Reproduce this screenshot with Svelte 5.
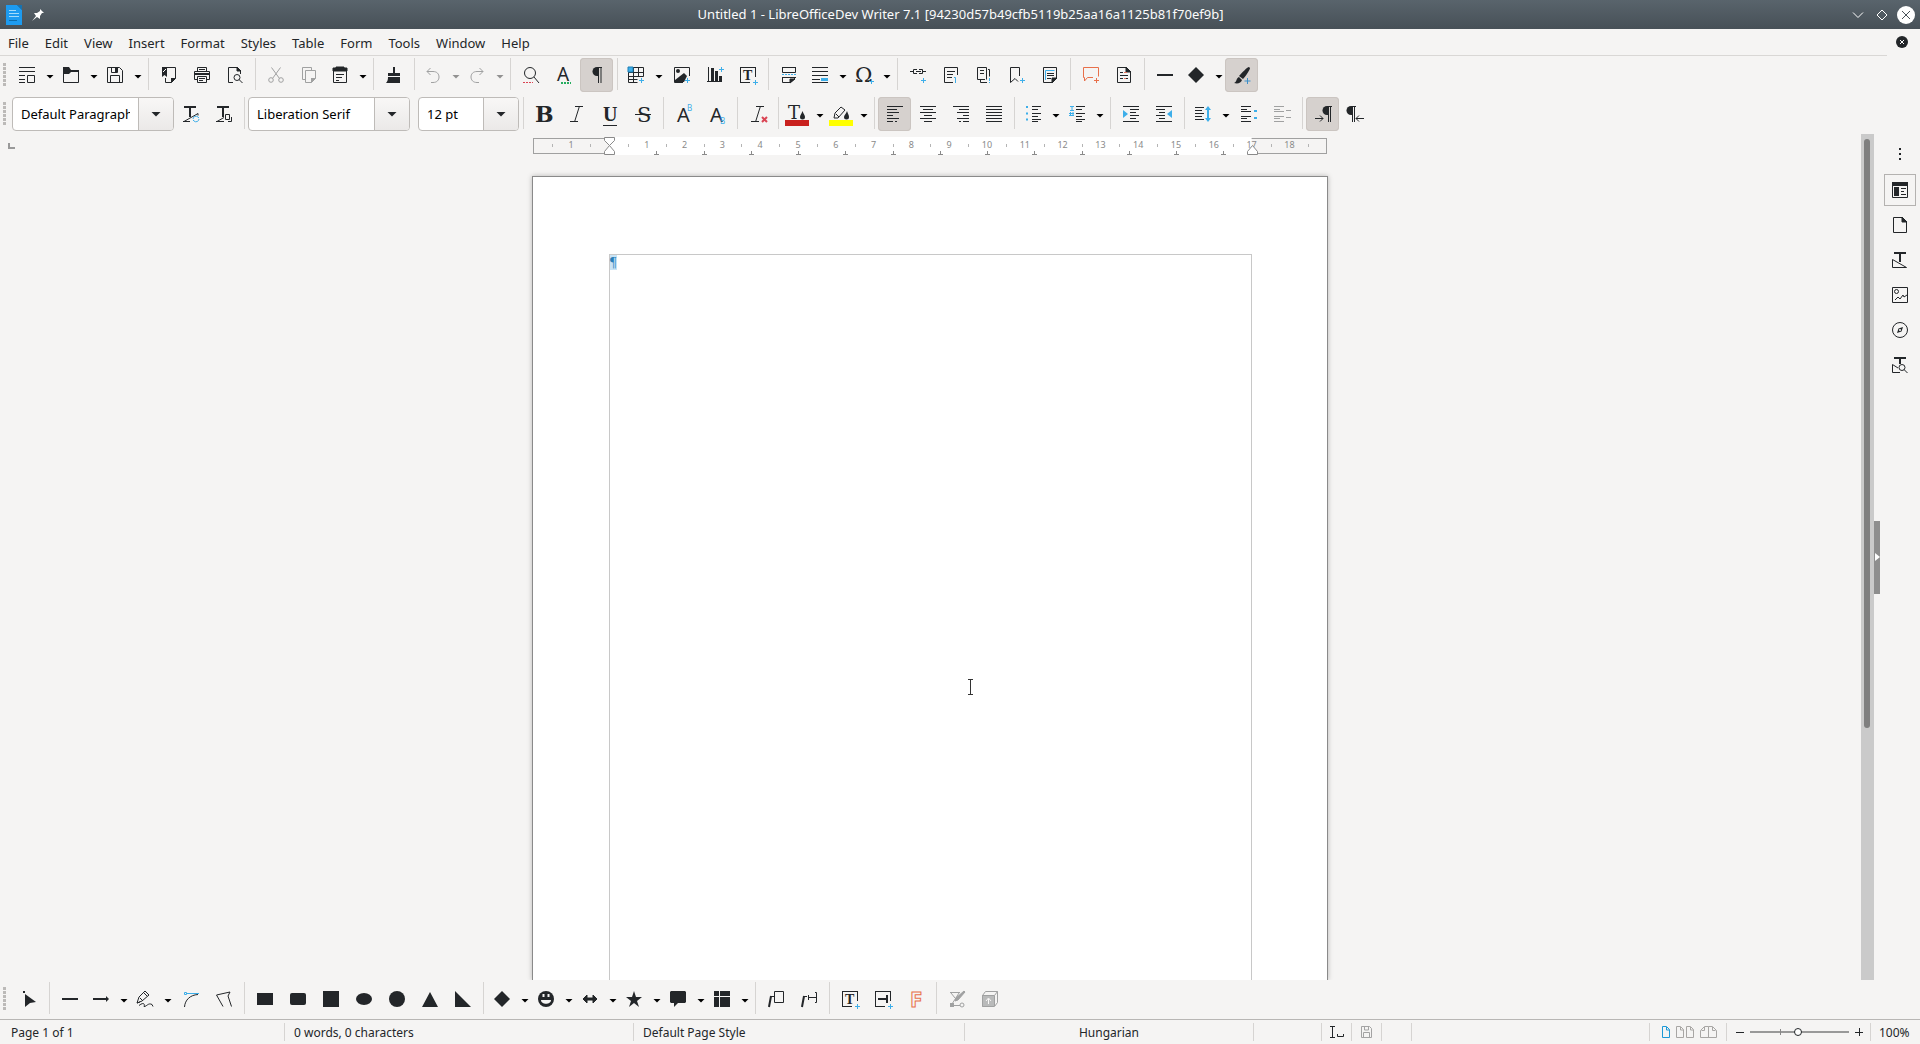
<script lang="ts">
  type Tool = {
    icon?: string;
    label?: string;
    split?: boolean;
    on?: boolean;
    off?: boolean;
    sep?: boolean;
    gap?: boolean;
    combo?: string;
    narrow?: boolean;
  };

  const menus = ['File', 'Edit', 'View', 'Insert', 'Format', 'Styles', 'Table', 'Form', 'Tools', 'Window', 'Help'];

  // 16x16 icons, everything is stroked with the text colour unless it says otherwise
  const icons: Record<string, string> = {
    new: '<path d="M0 .5h16M0 4.5h6M0 8.5h6M0 12.5h6M0 15.5h6M8.5 8.5h7v7h-7zM0 4.5h16"/>',
    open: '<path d="M.5 1v14.500h15V4.500H8"/><path d="M0 0h6l2 3h8v2H8L6 7H0z" fill="#232629" stroke="none"/>',
    save: '<path d="M.5.500h12l3 3v12H.500zM3.500 15V8.500h9V15M4.500 1v4.500h6V1"/><path d="M8 1h2v4H8z" fill="#232629" stroke="none"/>',
    exportpdf: '<path d="M5 .500h9.500v11l-4 4h-6V11"/><path d="M1 0h5v10l-2.500-2L1 10z" fill="#232629" stroke="none"/><path d="M10 16v-5h5z" fill="#232629" stroke="none"/><path d="M2 5l3-3" stroke="#fff"/>',
    print: '<path d="M3.500 4V.500h9V4M5 2.500h6M3.500 12.500h-3v-8h15v8h-3"/><path d="M3.500 9.500h9v6h-9zM5 11.500h6M5 13.500h4"/><path d="M1 6h14v2H1z" fill="#232629" stroke="none"/>',
    preview: '<path d="M6 15.500H1.500V.500h9l3 3V7"/><path d="M10 0v4h4z" fill="#232629"/><circle cx="10" cy="10.500" r="3"/><path d="M12 12.500l3.500 3.500"/>',
    cut: '<path d="M3.500.500l8 11M12.500.500l-8 11"/><circle cx="3" cy="13" r="2.300"/><circle cx="13" cy="13" r="2.300"/>',
    copy: '<path d="M4 12.500H1.500V.500h9V3"/><path d="M4.500 3.500h10v8l-4 4h-6z"/><path d="M10 16v-5h5z" fill="#232629" stroke="none"/>',
    paste: '<path d="M1.500 1.500h13v14h-13zM4 7.500h8M4 10.500h6M4 13.500h3"/><path d="M1 1h3V0h8v1h3v3H1z" fill="#232629"/>',
    clone: '<path d="M7 0h2v6h5v3H2V6h5zM2 10h12v6H0c1.500-1.500 2-3 2-6z" fill="#232629" stroke="none"/>',
    undo: '<path d="M5.500 1L2 4.500 5.500 8M2 4.500h6c4 0 6 2.500 6 5.500s-2 5.500-6 5.500H6"/>',
    redo: '<path d="M10.500 1L14 4.500 10.500 8M14 4.500H8c-4 0-6 2.500-6 5.500s2 5.500 6 5.500h2"/>',
    find: '<circle cx="7" cy="6" r="5.500"/><path d="M11 10l5 6"/><path d="M0 15.500h10" stroke="#da4453" stroke-dasharray="2 1"/>',
    spell: '<text x="1" y="14" font-size="19" font-family="Noto Sans">A</text><path d="M5 16h10" stroke="#27ae60" stroke-width="2" stroke-dasharray="2 1"/>',
    pilcrow: '<path d="M12 0v16M9.500 0v16M8 .500h5"/><path d="M9 0H8a4 4 0 0 0 0 9h1z" fill="#232629" stroke="none"/>',
    table: '<path d="M.500.500h15v9M.500.500v15h9M.500 5.500h15M.500 9.500h15M.500 12.500h9M5.500 0v15M10.500 0v10"/><path d="M0 0h5v5H0z" fill="#3daee9" stroke="#1d7fb5"/><path d="M13.500 11v5M11 13.500h5" stroke="#3daee9"/>',
    image: '<path d="M9 15.500H.500V.500h15V9"/><circle cx="4" cy="4" r="2" fill="#232629" stroke="none"/><path d="M1 15V13l9-7 3 3-3 6z" fill="#232629" stroke="none"/><path d="M13.500 11v5M11 13.500h5" stroke="#3daee9"/>',
    chart: '<path d="M1.500 0v14.500H15M0 14.500h2"/><path d="M4 1h3v13H4zM8 4h3v10H8zM12 9h3v5h-3z" fill="#232629" stroke="none"/><path d="M14.500 0v5M12 2.500h5" stroke="#3daee9"/>',
    textbox: '<path d="M0 .500h16M.500 0v16M0 15.500h10M15.500 0v10"/><text x="3" y="13" font-size="14" font-weight="bold" font-family="Liberation Serif">T</text><path d="M15.500 13v5M13 15.500h5" stroke="#3daee9"/>',
    pagebreak: '<path d="M1.500 0v5.500h13V0M1 .500h14"/><path d="M1 7.500h15" stroke="#3daee9" stroke-dasharray="2 1"/><path d="M1.500 10v5.500h8l5-5V10M1 10.500h14"/><path d="M9 16v-4h5z" fill="#232629"/>',
    field: '<path d="M0 .500h16M0 4.500h16M0 8.500h16M0 12.500h8M0 15.500h16"/><path d="M9 11h7v3H9z" fill="#3daee9" stroke="none"/>',
    omega: '<text x="-1" y="15" font-size="21" font-family="DejaVu Serif">Ω</text><path d="M15.500 12v5M13 14.500h5" stroke="#3daee9"/>',
    link: '<path d="M0 4.500h3M7 2.500H3.500v4H7M6 4.500h5M9 2.500h3.500v4H9M13 4.500h3"/><path d="M13.500 11v5M11 13.500h5" stroke="#3daee9"/>',
    footnote: '<path d="M10 15.500H1.500V.500h13V8M4 4.500h8M4 7.500h6M4 10.500h5"/><path d="M12.500 16v-5.500H11" stroke="#3daee9"/>',
    endnote: '<path d="M9 12.500H1.500V.500h9v12M4 3.500h4M4 6.500h4M12 2.500h1.500v7M4.500 13v2.500H11"/><path d="M13.500 11v5" stroke="#3daee9" stroke-dasharray="3 1"/>',
    bookmark: '<path d="M10.500 9V.500h-9v15l4.500-4 3 3"/><path d="M13.500 11v5M11 13.500h5" stroke="#3daee9"/>',
    crossref: '<path d="M1.500.500h13v11l-4 4h-9z"/><path d="M3.500 13V3.500h9" stroke="#3daee9"/><path d="M5 6.500h7M5 8.500h7M5 11.500h4"/><path d="M10 16v-5h5z" fill="#232629"/>',
    comment: '<g stroke="#e8704a"><path d="M10 10.500H4.500l-3 3.500v-3.500H.500V.500h15v9M13.500 11v5M11 13.500h5"/></g>',
    track: '<path d="M1.500.500h9l4 4v11h-13zM4 5.500h3M4 8.500h8M4 11.500h3M9 11.500h3"/><path d="M10 0v5h5z" fill="#232629"/><path d="M8 5.500h3M8 11.500h2" stroke="#e5735c"/>',
    line: '<path d="M0 8h16" stroke-width="2"/>',
    diamond: '<path d="M8 0l8 8-8 8-8-8z" fill="#232629" stroke="none"/>',
    brush: '<path d="M15 0l1 1c0 2-5 9-7 11l-4-3c3-3 8-9 10-9zM5 10l3 3c-1 3-4 4-8 3 3-1 2-5 5-6z" fill="#232629" stroke="none"/><path d="M13.500 11v6M10.500 14h6" stroke="#3d8fc9"/>',

    updatestyle: '<path d="M1 1h12M7 1v10" stroke-width="2"/><path d="M0 15.500h7M1 15.500l14-8v2"/><path d="M10 13a3 3 0 0 1 5-2l1 1M16 13a3 3 0 0 1-5 2l-1-1" stroke="#3daee9"/>',
    newstyle: '<path d="M1 1h12M7 1v10" stroke-width="2"/><path d="M0 15.500h8M1 15.500l7-4M9.500 8.500h4v5h-4zM12 15.500h3.500V11"/>',
    bold: '<text x="-1" y="16" font-size="22" font-weight="bold" font-family="DejaVu Serif">B</text>',
    italic: '<path d="M6 .500h8M1 15.500h8M10.500 0l-5 16" />',
    underline: '<text x="1" y="15" font-size="20" font-weight="bold" font-family="Liberation Serif">U</text><path d="M1 19.500h14"/>',
    strike: '<text x="2" y="16" font-size="21" font-family="DejaVu Serif">S</text><path d="M0 8.500h16" />',
    sup: '<text x="1" y="16" font-size="20" font-family="Noto Sans">A</text><text x="11" y="5" font-size="8" font-family="Noto Sans" fill="#3daee9">B</text>',
    sub: '<text x="1" y="16" font-size="20" font-family="Noto Sans">A</text><text x="11" y="18" font-size="8" font-family="Noto Sans" fill="#3daee9">B</text>',
    clear: '<path d="M6 .500h8M1 15.500h8M10.500 0l-5 16"/><path d="M12 11l5 5M17 11l-5 5" stroke="#da4453" stroke-width="2"/>',
    fontcolor: '<text x="-1" y="13" font-size="18" font-family="DejaVu Serif">T</text><path d="M13.500 5c1 3 2.500 4 2.500 6a2.500 2.500 0 0 1-5 0c0-2 1.500-3 2.500-6z" fill="#232629" stroke="none"/><path d="M-4 14h24v6H-4z" fill="#c9211e" stroke="none"/>',
    highlight: '<path d="M1 12l1-5 6-6 4 3-7 8zM3 8l3 3"/><path d="M14 5c1 3 2 4 2 6a2.500 2.500 0 0 1-5 0c0-2 2-3 3-6z" fill="#232629" stroke="none"/><path d="M-4 14h24v6H-4z" fill="#ffff00" stroke="none"/>',
    left: '<path d="M0 .500h16M0 3.500h10M0 6.500h12M0 9.500h6M0 12.500h12M0 15.500h6M8 15.500h2"/>',
    center: '<path d="M0 .500h16M3 3.500h10M0 6.500h16M4 9.500h8M0 12.500h16M4 15.500h8"/>',
    right: '<path d="M0 .500h16M6 3.500h10M4 6.500h12M10 9.500h6M4 12.500h12M6 15.500h2M10 15.500h6"/>',
    justify: '<path d="M0 .500h16M0 3.500h16M0 6.500h16M0 9.500h16M0 12.500h16M0 15.500h16"/>',
    bullets: '<path d="M7 .500h9M7 3.500h6M7 7.500h9M7 10.500h6M7 13.500h9M7 15.500h6"/><path d="M1 1h2M1 7.500h2M1 13.500h2" stroke="#3daee9" stroke-width="2"/>',
    numbers: '<path d="M7 .500h9M7 3.500h6M7 7.500h9M7 10.500h6M7 13.500h9M7 15.500h6"/><path d="M1 .500h4M3 1v3M1 4.500h4M0 7.500h5M0 9.500h5M1.500 6v4M4 6v4" stroke="#3daee9"/>',
    indent: '<path d="M0 .500h16M7 3.500h9M7 6.500h6M7 9.500h9M7 12.500h6M0 15.500h16"/><path d="M0 4l5 4-5 4z" fill="#3daee9" stroke="none"/>',
    outdent: '<path d="M0 .500h16M0 3.500h9M3 6.500h6M0 9.500h9M3 12.500h6M0 15.500h16"/><path d="M16 4l-5 4 5 4z" fill="#3daee9" stroke="none"/>',
    spacing: '<path d="M0 1.500h9M0 4.500h7M0 7.500h9M0 10.500h7M0 13.500h9"/><path d="M13 2v12" stroke="#3daee9" stroke-width="2"/><path d="M10 4l3-4 3 4zM10 12l3 4 3-4z" fill="#3daee9" stroke="none"/>',
    incspace: '<path d="M0 .500h10M0 3.500h6M0 5.500h10M0 10.500h10M0 12.500h6M0 15.500h10"/><path d="M13 4h3v2h-3zM13 11h3v2h-3z" fill="#3daee9" stroke="none"/>',
    decspace: '<path d="M0 .500h10M0 3.500h6M0 5.500h10M0 10.500h10M0 12.500h6M0 15.500h10M12 4.500h5M12 11.500h5"/>',
    ltr: '<path d="M13.500 0v16M15.500 0v16M12 .500h5M0 12.500h8M5 9.500l3 3-3 3"/><path d="M13 0h-1a4 4 0 0 0 0 9h1z" fill="#232629" stroke="none"/>',
    rtl: '<path d="M4.500 0v16M6.500 0v16M3 .500h5M8 12.500h8M11 9.500l-3 3 3 3"/><path d="M4 0H3a4 4 0 0 0 0 9h1z" fill="#232629" stroke="none"/>',

    select: '<path d="M4 3l11 8-6 1-5 4z" fill="#232629" stroke="none"/><path d="M2 1h2" stroke-width="2"/>',
    arrowline: '<path d="M0 8h14" stroke-width="2"/><path d="M13 5l3 3-3 3z" fill="#232629" stroke="none"/>',
    pencil: '<path d="M0 12l2-6 6-6 4 4-7 6zM3 7l3 3M7 2l3 3M0 12l3-1"/><path d="M2 14.500c5-4 6-1 5 1 3 0 4-4 8-2l1 2"/>',
    curve: '<path d="M1.500 16C2 9 7 4 15 3.500"/><path d="M4 2.500h12M1.500 1.500h2v2h-2z" stroke="#3daee9"/>',
    polygon: '<path d="M7 15.500L.500 4 14 1l-2 4 3.500 10.500"/>',
    rect: '<path d="M0 2h16v12H0z" fill="#232629" stroke="none"/>',
    roundrect: '<rect y="2" width="16" height="12" rx="2" fill="#232629" stroke="none"/>',
    square: '<path d="M0 0h16v16H0z" fill="#232629" stroke="none"/>',
    ellipse: '<ellipse cx="8" cy="8" rx="8" ry="6" fill="#232629" stroke="none"/>',
    circle: '<circle cx="8" cy="8" r="8" fill="#232629" stroke="none"/>',
    triangle: '<path d="M8 1l8 15H0z" fill="#232629" stroke="none"/>',
    righttri: '<path d="M0 0l16 16H0z" fill="#232629" stroke="none"/>',
    smiley: '<circle cx="8" cy="8" r="8" fill="#232629" stroke="none"/><path d="M3 9h10c0 5-10 5-10 0z" fill="#f5f4f3" stroke="none"/><path d="M5.500 3v3M10.500 3v3" stroke="#f5f4f3" stroke-width="2"/>',
    blockarrow: '<path d="M1 8l4-4v3h6V4l4 4-4 4v-3H5v3z" fill="#232629"/>',
    star: '<path d="M8 0l2 6h6l-5 4 2 6-5-4-5 4 2-6-5-4h6z" fill="#232629" stroke="none"/>',
    bubble: '<path d="M1 0h14l1 1v10l-1 1H8l-4 4v-4H1l-1-1V1z" fill="#232629" stroke="none"/>',
    flowchart: '<path d="M0 0h5v5H0zM6 0h10v5H6zM0 6h5v10H0zM6 6h10v10H6z" fill="#232629" stroke="none"/>',
    callout: '<path d="M6.500.500h9v11h-9zM3 5.500h3"/><path d="M3 5L1 16" stroke-width="2"/>',
    vcallout: '<path d="M2 5.500h4"/><path d="M3 5L1 16" stroke-width="2"/><path d="M7 6.500h8M14 1.500h1.500v10H14M7.500 4v5"/>',
    vtext: '<path d="M0 .500h16M.500 0v16M0 15.500h10M15.500 0v10M3 8h9"/><path d="M3 8h9M12 4v8" stroke-width="2"/><path d="M15.500 13v5M13 15.500h5" stroke="#3daee9"/>',
    fontwork: '<text x="2" y="16" font-size="22" font-weight="bold" font-family="Noto Sans" fill="none" stroke="#e8704a">F</text>',
    points: '<path d="M1 1.500h10M2 2l4 5M10 2L3 13M3 14.500h8M15 0l1 1-7 8-3 1 1-3z"/><circle cx="13" cy="14" r="2"/><path d="M1 12h4v4H1zM15 0l1 1-7 8-3 1 1-3z" fill="#232629" stroke="none"/>',
    extrude: '<path d="M0 4h12v12H0z" fill="#232629" opacity=".7" stroke="none"/><path d="M.500 4.500l3-4h12v11l-3 4H.500zM12.500 15V4.500h-12M12.500 4.500l3-4"/><path d="M6.500 13V8M4 10l2.500-3L9 10" stroke="#fff"/>',

    properties: '<path d="M.500.500h15v15H.500zM9 6.500h5M9 9.500h3M9 12.500h5"/><path d="M0 0h16v4H0zM2 5h5v9H2z" fill="#232629" stroke="none"/>',
    page: '<path d="M1.500.500h9l4 4v11h-13z"/><path d="M10 0v5h5z" fill="#232629"/>',
    styles: '<path d="M2 1h12M8 1v9" stroke-width="2"/><path d="M.500 15.500v-8l14 8z"/>',
    gallery: '<path d="M.500.500h15v15H.500zM3 13l3-3 2 2 3-4 1 2 3-2"/><circle cx="4.500" cy="4.500" r="2"/>',
    navigator: '<circle cx="8" cy="8" r="7.500"/><path d="M11 5l-1.500 4.500L5 11l1.500-4.500z" fill="#232629" stroke="none"/><circle cx="8" cy="8" r="1" fill="#fff" stroke="none"/>',
    inspector: '<path d="M2 1h12M8 1v6" stroke-width="2"/><path d="M8 15.500H.500v-8L6 11"/><circle cx="10" cy="10.500" r="3"/><path d="M12 12.500l3.500 3.500"/>'
  };

  const sep: Tool = { sep: true };

  const standard: Tool[] = [
    { icon: 'new', label: 'New', split: true },
    { icon: 'open', label: 'Open', split: true },
    { icon: 'save', label: 'Save', split: true },
    sep,
    { icon: 'exportpdf', label: 'Export as PDF' },
    { icon: 'print', label: 'Print' },
    { icon: 'preview', label: 'Print Preview' },
    sep,
    { icon: 'cut', label: 'Cut', off: true },
    { icon: 'copy', label: 'Copy', off: true },
    { icon: 'paste', label: 'Paste', split: true },
    sep,
    { icon: 'clone', label: 'Clone Formatting' },
    sep,
    { icon: 'undo', label: 'Undo', split: true, off: true },
    { icon: 'redo', label: 'Redo', split: true, off: true },
    sep,
    { icon: 'find', label: 'Find & Replace' },
    { icon: 'spell', label: 'Spelling' },
    { icon: 'pilcrow', label: 'Formatting Marks', on: true },
    sep,
    { icon: 'table', label: 'Insert Table', split: true },
    { icon: 'image', label: 'Insert Image' },
    { icon: 'chart', label: 'Insert Chart' },
    { icon: 'textbox', label: 'Insert Text Box' },
    sep,
    { icon: 'pagebreak', label: 'Insert Page Break' },
    { icon: 'field', label: 'Insert Field', split: true },
    { icon: 'omega', label: 'Insert Special Character', split: true },
    sep,
    { icon: 'link', label: 'Insert Hyperlink' },
    { icon: 'footnote', label: 'Insert Footnote' },
    { icon: 'endnote', label: 'Insert Endnote' },
    { icon: 'bookmark', label: 'Insert Bookmark' },
    { icon: 'crossref', label: 'Insert Cross-reference' },
    sep,
    { icon: 'comment', label: 'Insert Comment' },
    { icon: 'track', label: 'Track Changes' },
    sep,
    { icon: 'line', label: 'Insert Line' },
    { icon: 'diamond', label: 'Basic Shapes', split: true },
    { icon: 'brush', label: 'Show Draw Functions', on: true }
  ];

  const formatting: Tool[] = [
    { combo: 'Default Paragraph Style', label: 'Paragraph Style' },
    { icon: 'updatestyle', label: 'Update Selected Style' },
    { icon: 'newstyle', label: 'New Style from Selection' },
    sep,
    { combo: 'Liberation Serif', label: 'Font Name' },
    { gap: true },
    { combo: '12 pt', label: 'Font Size', narrow: true },
    sep,
    { icon: 'bold', label: 'Bold' },
    { icon: 'italic', label: 'Italic' },
    { icon: 'underline', label: 'Underline' },
    { icon: 'strike', label: 'Strikethrough' },
    sep,
    { icon: 'sup', label: 'Superscript' },
    { icon: 'sub', label: 'Subscript' },
    sep,
    { icon: 'clear', label: 'Clear Direct Formatting' },
    sep,
    { icon: 'fontcolor', label: 'Font Color', split: true },
    { icon: 'highlight', label: 'Highlighting', split: true },
    sep,
    { icon: 'left', label: 'Align Left', on: true },
    { icon: 'center', label: 'Align Center' },
    { icon: 'right', label: 'Align Right' },
    { icon: 'justify', label: 'Justified' },
    sep,
    { icon: 'bullets', label: 'Unordered List', split: true },
    { icon: 'numbers', label: 'Ordered List', split: true },
    sep,
    { icon: 'indent', label: 'Increase Indent' },
    { icon: 'outdent', label: 'Decrease Indent' },
    sep,
    { icon: 'spacing', label: 'Line Spacing', split: true },
    { icon: 'incspace', label: 'Increase Paragraph Spacing' },
    { icon: 'decspace', label: 'Decrease Paragraph Spacing', off: true },
    sep,
    { icon: 'ltr', label: 'Left-To-Right', on: true },
    { icon: 'rtl', label: 'Right-To-Left' }
  ];

  const drawing: Tool[] = [
    { icon: 'select', label: 'Select' },
    sep,
    { icon: 'line', label: 'Line' },
    { icon: 'arrowline', label: 'Lines and Arrows', split: true },
    { icon: 'pencil', label: 'Curves and Polygons', split: true },
    { icon: 'curve', label: 'Curve' },
    { icon: 'polygon', label: 'Polygon' },
    sep,
    { icon: 'rect', label: 'Rectangle' },
    { icon: 'roundrect', label: 'Rounded Rectangle' },
    { icon: 'square', label: 'Square' },
    { icon: 'ellipse', label: 'Ellipse' },
    { icon: 'circle', label: 'Circle' },
    { icon: 'triangle', label: 'Isosceles Triangle' },
    { icon: 'righttri', label: 'Right Triangle' },
    sep,
    { icon: 'diamond', label: 'Basic Shapes', split: true },
    { icon: 'smiley', label: 'Symbol Shapes', split: true },
    { icon: 'blockarrow', label: 'Block Arrows', split: true },
    { icon: 'star', label: 'Stars and Banners', split: true },
    { icon: 'bubble', label: 'Callout Shapes', split: true },
    { icon: 'flowchart', label: 'Flowchart', split: true },
    sep,
    { icon: 'callout', label: 'Callouts' },
    { icon: 'vcallout', label: 'Vertical Callouts' },
    sep,
    { icon: 'textbox', label: 'Text Box' },
    { icon: 'vtext', label: 'Vertical Text' },
    { icon: 'fontwork', label: 'Fontwork' },
    sep,
    { icon: 'points', label: 'Points', off: true },
    { icon: 'extrude', label: 'Toggle Extrusion', off: true }
  ];

  const decks = [
    { icon: 'properties', label: 'Properties' },
    { icon: 'page', label: 'Page' },
    { icon: 'styles', label: 'Styles' },
    { icon: 'gallery', label: 'Gallery' },
    { icon: 'navigator', label: 'Navigator' },
    { icon: 'inspector', label: 'Style Inspector' }
  ];
  let deck = $state('Properties');
  let zoom = $state(39);

  // ruler: 1 cm is 37.8 px, text starts 77 px from the page edge
  const cm = 37.8;
  const origin = 77;
  const numbers = [-1, ...Array.from({ length: 18 }, (_, i) => i + 1)];
  const halves = [-1.5, -0.5, ...Array.from({ length: 19 }, (_, i) => i + 0.5)].filter((n) => n < 19);
  const tabs = Array.from({ length: 13 }, (_, i) => (i + 1) * 1.25);
</script>

{#snippet icon(name: string)}
  <svg class="icon" width="16" height="16" viewBox="0 0 16 16" aria-hidden="true">{@html icons[name]}</svg>
{/snippet}

{#snippet toolbar(items: Tool[], name: string)}
  <div class="toolbar" role="toolbar" aria-label={name}>
    <span class="grip"></span>
    {#each items as item}
      {#if item.sep}
        <span class="sep"></span>
      {:else if item.gap}
        <span class="gap"></span>
      {:else if item.combo}
        <div class="combo" class:narrow={item.narrow}>
          <input type="text" value={item.combo} aria-label={item.label} />
          <button aria-label="{item.label} list"><span class="arrow big"></span></button>
        </div>
      {:else if item.split}
        <div class="split" class:off={item.off}>
          <button class="main" aria-label={item.label} disabled={item.off}>{@render icon(item.icon!)}</button>
          <button class="drop" aria-label="{item.label} options" disabled={item.off}><span class="arrow"></span></button>
        </div>
      {:else}
        <button class="tool" class:on={item.on} class:off={item.off} aria-label={item.label} disabled={item.off}>
          {@render icon(item.icon!)}
        </button>
      {/if}
    {/each}
  </div>
{/snippet}

<div class="window">
  <header class="titlebar">
    <div class="side">
      <svg width="16" height="20" viewBox="0 0 16 20" aria-hidden="true">
        <path d="M0 0h11l5 5v15H0z" fill="#1d9bf0" />
        <path d="M11 0h5v5z" fill="#1673b1" />
        <path d="M3 5.500h7M3 8.500h10M3 11.500h10" stroke="#a5dbfa" />
        <path d="M3 15.500h8" stroke="#0d6cab" />
      </svg>
      <svg width="12" height="12" viewBox="0 0 12 12" aria-hidden="true">
        <path d="M8 0l4 4-2 0-2 3v3L5 8l-5 4 4-5-2-3h3l3-2z" fill="#fff" />
      </svg>
    </div>
    <h1>Untitled 1 - LibreOfficeDev Writer 7.1 [94230d57b49cfb5119b25aa16a1125b81f70ef9b]</h1>
    <div class="side end">
      <button aria-label="Minimize">
        <svg width="12" height="12" viewBox="0 0 12 12"><path d="M1 3.500l5 5 5-5" fill="none" stroke="#fff" /></svg>
      </button>
      <button aria-label="Restore">
        <svg width="12" height="12" viewBox="0 0 12 12"><path d="M6 1l5 5-5 5-5-5z" fill="none" stroke="#fff" /></svg>
      </button>
      <button aria-label="Close">
        <svg width="18" height="18" viewBox="0 0 18 18"><circle cx="9" cy="9" r="9" fill="#fff" /><path d="M5 5l8 8M13 5l-8 8" stroke="#4a5258" /></svg>
      </button>
    </div>
  </header>

  <nav class="menubar">
    {#each menus as m}
      <button>{m}</button>
    {/each}
    <button class="closedoc" aria-label="Close document">
      <svg width="12" height="12" viewBox="0 0 12 12"><circle cx="6" cy="6" r="6" fill="#232629" /><path d="M4 4l4 4M8 4l-4 4" stroke="#fff" /></svg>
    </button>
  </nav>

  <div class="bars">
    {@render toolbar(standard, 'Standard')}
    {@render toolbar(formatting, 'Formatting')}
  </div>

  <div class="work">
    <main class="editor">
      <div class="rulerrow">
        <svg class="tabkind" width="7" height="6" viewBox="0 0 7 6" aria-hidden="true"><path d="M1 0v5h6" fill="none" stroke="#999" stroke-width="2" /></svg>
        <svg class="ruler" viewBox="0 0 796 18" aria-hidden="true">
          <rect x="1.500" y="1.500" width="793" height="15" fill="#f5f4f3" stroke="#a0a0a0" />
          <rect x={origin} y="0" width={17 * cm} height="18" fill="#fff" />
          {#each numbers as n}
            <text x={origin + n * cm} y="11">{Math.abs(n)}</text>
          {/each}
          {#each halves as h}
            <path d="M{Math.round(origin + h * cm) + 0.5} 7v3" stroke="#b4b4b4" />
          {/each}
          {#each tabs as t}
            <path d="M{Math.round(origin + t * cm) + 0.5} 14v3m-2.500.500h5" stroke="#8a8a8a" />
          {/each}
          <path d="M72.500.500h10v3l-5 5-5-5zM72.500 17.500h10v-3l-5-6-5 6z" fill="#fff" stroke="#8a8a8a" />
          <path d="M715.500 17.500h10v-3l-5-6-5 6z" fill="#fff" stroke="#8a8a8a" />
        </svg>
      </div>
      <div class="canvas">
        <div class="page">
          <div class="body"><span class="para">¶</span></div>
        </div>
        <svg class="ibeam" width="7" height="18" viewBox="0 0 7 18" aria-hidden="true"><path d="M1 1.500h5M1 16.500h5M3.500 1v16" stroke="#333" fill="none" /></svg>
      </div>
    </main>
    <div class="scroll"><div class="thumb"></div></div>
    <button class="handle" aria-label="Hide sidebar"><span></span></button>
    <aside class="sidebar">
      <button class="dots" aria-label="Sidebar settings"><i></i><i></i><i></i></button>
      {#each decks as d}
        <button class="deck" class:active={deck === d.label} aria-label={d.label} onclick={() => (deck = d.label)}>
          {@render icon(d.icon)}
        </button>
      {/each}
    </aside>
  </div>

  {@render toolbar(drawing, 'Drawing')}

  <footer class="status">
    <span class="pages">Page 1 of 1</span>
    <span class="words">0 words, 0 characters</span>
    <span class="style">Default Page Style</span>
    <span class="lang">Hungarian</span>
    <span class="blank"></span>
    <span class="cell">
      <svg width="16" height="12" viewBox="0 0 16 12" aria-hidden="true"><path d="M1 .500h5M1 11.500h5M3.500 0v12M8.500 8v2.500h6V8" fill="none" stroke="#232629" /></svg>
    </span>
    <span class="cell">
      <svg width="11" height="12" viewBox="0 0 11 12" aria-hidden="true"><path d="M.500.500h8l2 2v9H.500zM2.500 11V6.500h6V11M3.500 1v3h4V1" fill="none" stroke="#a3a3a3" /></svg>
    </span>
    <span class="cell"></span>
    <span class="spacer"></span>
    <span class="views">
      <button aria-label="Single-page view"><svg width="8" height="12" viewBox="0 0 8 12"><path d="M.500.500h4l3 3v8h-7zM4.500 1v3h3" fill="none" stroke="#1d99d6" /></svg></button>
      <button aria-label="Multiple-page view"><svg width="18" height="12" viewBox="0 0 18 12"><path d="M.500.500h4l3 3v8h-7zM4.500 1v3h3M10.500.500h4l3 3v8h-7zM14.500 1v3h3" fill="none" stroke="#a8a6a4" /></svg></button>
      <button aria-label="Book view"><svg width="17" height="12" viewBox="0 0 17 12"><path d="M8.500 11.500V.500h-4l-4 4v7h16v-7l-4-4h-4M4.500 1v3.500h-3M12.500 1v3.500h3" fill="none" stroke="#a8a6a4" /></svg></button>
    </span>
    <span class="zoom">
      <button aria-label="Zoom out"><svg width="8" height="8" viewBox="0 0 8 8"><path d="M0 4.500h8" stroke="#232629" /></svg></button>
      <span class="slider">
        <input type="range" min="0" max="80" bind:value={zoom} aria-label="Zoom" />
        <i></i>
      </span>
      <button aria-label="Zoom in"><svg width="8" height="8" viewBox="0 0 8 8"><path d="M0 4.500h8M4.500 0v8" stroke="#232629" /></svg></button>
    </span>
    <span class="percent">100%</span>
  </footer>
</div>

<style>
  :global(body) {
    background: #f5f4f3;
  }

  .window {
    display: flex;
    flex-direction: column;
    height: 100vh;
    overflow: hidden;
    background: #f5f4f3;
    color: #232629;
    font-family: "Noto Sans", sans-serif;
    font-size: 13px;
  }

  button {
    border: 0;
    padding: 0;
    background: none;
    color: inherit;
    font: inherit;
  }

  svg {
    display: block;
    flex: none;
  }

  .titlebar {
    display: flex;
    align-items: center;
    height: 29px;
    flex: none;
    background: linear-gradient(#59646c, #475057);
    color: #fcfcfc;
  }
  .titlebar h1 {
    margin: 0;
    padding-bottom: 1px;
    font-size: 13px;
    font-weight: normal;
    white-space: nowrap;
  }
  .side {
    display: flex;
    flex: 1;
    align-items: center;
    gap: 10px;
    padding-left: 6px;
  }
  .end {
    justify-content: flex-end;
    gap: 12px;
    padding: 0 5px 0 0;
  }
  .end button:last-child {
    margin-left: -3px;
  }

  .menubar {
    display: flex;
    height: 26px;
    flex: none;
    margin-right: 33px;
    border-bottom: 1px solid #d9d7d5;
  }
  .menubar button {
    padding: 2px 8px 0;
  }
  .menubar .closedoc {
    margin: 0 -21px 0 auto;
    padding: 0;
  }

  .toolbar {
    display: flex;
    height: 39px;
    flex: none;
    box-sizing: border-box;
    padding-top: 2px;
    padding-left: 3px;
  }
  .grip {
    width: 3px;
    height: 24px;
    margin: 5px 6px 0 0;
    background: repeating-linear-gradient(#bcbab8 0 3px, #f5f4f3 3px 4px);
  }
  .sep {
    width: 1px;
    height: 32px;
    margin: 0 3px 0 4px;
    background: #d6d4d2;
  }
  .gap {
    width: 8px;
  }
  .tool {
    width: 33px;
    height: 34px;
    padding-left: 9px;
    border-radius: 4px;
  }
  .on {
    background: #d6d1ce;
    box-shadow: inset 0 0 0 1px #cbc5c1;
  }
  .split {
    display: flex;
    height: 34px;
  }
  .main {
    width: 30px;
    padding-left: 7px;
  }
  .drop {
    width: 14px;
    padding: 3px 0 0 4px;
  }
  .off {
    opacity: 0.4;
  }
  .arrow {
    display: block;
    width: 8px;
    height: 4px;
    background: #000;
    clip-path: polygon(0 0, 100% 0, 50% 100%);
  }
  .big {
    width: 10px;
    height: 5px;
    margin: auto;
    background: #232629;
  }
  .icon {
    overflow: visible;
    fill: none;
    stroke: #232629;
  }
  .icon :global(text) {
    stroke: none;
    fill: #232629;
  }
  .icon :global(text[fill]) {
    fill: #3daee9;
  }
  .icon :global(text[stroke]) {
    fill: none;
    stroke: #e8704a;
  }

  .combo {
    display: flex;
    box-sizing: border-box;
    width: 162px;
    height: 34px;
    border: 1px solid #bebbb8;
    border-radius: 4px;
    background: #fff;
    overflow: hidden;
  }
  .narrow {
    width: 101px;
  }
  .combo input {
    flex: 1;
    min-width: 0;
    margin: 0 8px;
    padding: 0;
    border: 0;
    outline: 0;
    background: none;
    color: #000;
    font: inherit;
  }
  .combo button {
    width: 35px;
    border-left: 1px solid #bebbb8;
    background: linear-gradient(#f8f7f6, #ebe9e8);
  }

  .work {
    display: flex;
    flex: 1;
    min-height: 0;
  }
  .editor {
    display: flex;
    flex: 1;
    flex-direction: column;
    min-width: 0;
    padding: 3px 1px 0 0;
  }
  .rulerrow {
    display: grid;
    grid-template-columns: 1fr 796px 1fr;
    align-items: center;
  }
  .tabkind {
    margin-left: 8px;
  }
  .ruler text {
    fill: #8a8a8a;
    font-size: 9px;
    text-anchor: middle;
  }
  .canvas {
    position: relative;
    display: flex;
    flex: 1;
    justify-content: center;
    min-height: 0;
    padding-top: 21px;
    overflow: hidden;
  }
  .page {
    box-sizing: border-box;
    width: 796px;
    padding: 77px 75px 0 76px;
    border: solid #8a8a8a;
    border-width: 1px 1px 0;
    background: #fff;
    box-shadow: 0 0 5px rgba(0, 0, 0, 0.25);
  }
  .body {
    height: 100%;
    box-sizing: border-box;
    border: solid #c8c8c8;
    border-width: 1px 1px 0;
  }
  .para {
    display: block;
    width: 7px;
    background: #c9e4f5;
    color: #2980b9;
    font: 14px/15px "Liberation Serif", serif;
  }
  /* mouse pointer floating over the page */
  .ibeam {
    position: absolute;
    left: 967px;
    top: 523px;
  }

  .scroll {
    width: 13px;
    padding-top: 5px;
    box-sizing: border-box;
    background: #cacaca;
  }
  .thumb {
    width: 6px;
    height: 70%;
    margin-left: 3px;
    border-radius: 3px;
    background: #7f7f7f;
  }
  .handle {
    align-self: center;
    width: 6px;
    height: 73px;
    background: #8e8e8e;
  }
  .handle span {
    display: block;
    width: 5px;
    height: 8px;
    margin-left: 1px;
    background: #fff;
    clip-path: polygon(0 0, 100% 50%, 0 100%);
  }
  .sidebar {
    display: flex;
    flex-direction: column;
    width: 40px;
    gap: 3px;
    padding-top: 14px;
    box-sizing: border-box;
    align-items: center;
  }
  .dots {
    display: flex;
    flex-direction: column;
    gap: 3px;
    margin: 0 0 11px;
  }
  .dots i {
    width: 2px;
    height: 2px;
    background: #232629;
  }
  .deck {
    display: grid;
    place-items: center;
    width: 32px;
    height: 32px;
    border: 1px solid transparent;
  }
  .active {
    border-color: #b4b2b0;
  }

  .status {
    display: flex;
    align-items: center;
    height: 25px;
    flex: none;
    box-sizing: border-box;
    border-top: 1px solid #b8b6b4;
    font-size: 12px;
  }
  .status > span {
    display: flex;
    align-items: center;
    height: 18px;
    box-sizing: border-box;
    border-right: 1px solid #d6d4d2;
  }
  .status .pages {
    width: 285px;
    padding-left: 11px;
  }
  .status .words {
    width: 349px;
    padding-left: 9px;
  }
  .status .style {
    width: 331px;
    padding-left: 9px;
  }
  .status .lang {
    width: 289px;
    justify-content: center;
  }
  .status .blank {
    width: 68px;
  }
  .status .cell {
    width: 30px;
    justify-content: center;
  }
  .status .spacer {
    flex: 1;
  }
  .status .views {
    width: 77px;
    gap: 6px;
    padding-left: 12px;
  }
  .status .zoom {
    width: 144px;
    gap: 6px;
    padding-left: 9px;
  }
  .slider {
    position: relative;
    flex: 0 0 99px;
    height: 18px;
  }
  .slider input {
    display: block;
    width: 100%;
    height: 18px;
    margin: 0;
    appearance: none;
    background: linear-gradient(#999, #999) center / 100% 2px no-repeat;
  }
  .slider input::-webkit-slider-thumb {
    appearance: none;
    width: 8px;
    height: 8px;
    border: 1px solid #232629;
    border-radius: 50%;
    background: #fff;
  }
  .slider i {
    position: absolute;
    left: 30px;
    top: 6px;
    width: 1px;
    height: 6px;
    background: #888;
  }
  .status .percent {
    width: 49px;
    padding-left: 8px;
    border: 0;
  }
</style>
